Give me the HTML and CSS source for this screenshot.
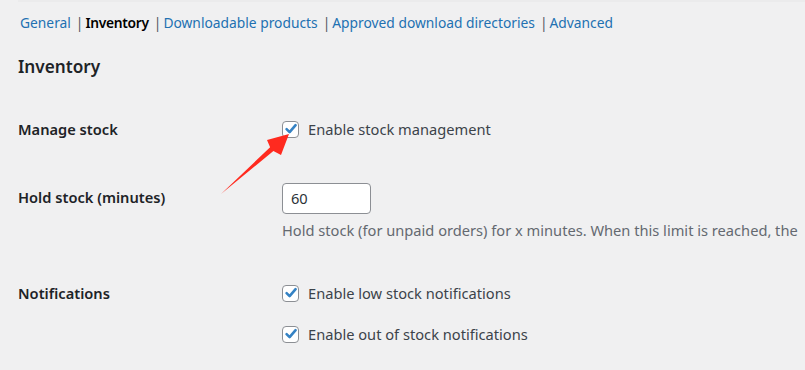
FILE: index.html
```html
<!DOCTYPE html>
<html>
<head>
<meta charset="utf-8">
<link rel="stylesheet" href="styles.css">
</head>
<body>
<div class="page">
  <div class="topband"></div>
  <ul class="subsubsub">
    <li><a href="#">General</a><span class="sep">|</span></li>
    <li><span class="current">Inventory</span><span class="sep">|</span></li>
    <li><a href="#">Downloadable products</a><span class="sep">|</span></li>
    <li><a href="#">Approved download directories</a><span class="sep">|</span></li>
    <li><a href="#">Advanced</a></li>
  </ul>
  <h2 class="title">Inventory</h2>
  <div class="row row-manage">
    <div class="label">Manage stock</div>
    <div class="field">
      <label class="check"><span class="box"><svg viewBox="0 0 16 16" width="16" height="16"><path d="M3.6 8.2 L6.6 11.2 L12.6 4.2" fill="none" stroke="#3582c4" stroke-width="2.6" stroke-linecap="round" stroke-linejoin="round"/></svg></span>Enable stock management</label>
    </div>
  </div>
  <div class="row row-hold">
    <div class="label">Hold stock (minutes)</div>
    <div class="field">
      <div class="input">60</div>
      <p class="desc">Hold stock (for unpaid orders) for x minutes. When this limit is reached, the</p>
    </div>
  </div>
  <div class="row row-notify">
    <div class="label">Notifications</div>
    <div class="field">
      <label class="check"><span class="box"><svg viewBox="0 0 16 16" width="16" height="16"><path d="M3.6 8.2 L6.6 11.2 L12.6 4.2" fill="none" stroke="#3582c4" stroke-width="2.6" stroke-linecap="round" stroke-linejoin="round"/></svg></span>Enable low stock notifications</label>
      <label class="check check-second"><span class="box"><svg viewBox="0 0 16 16" width="16" height="16"><path d="M3.6 8.2 L6.6 11.2 L12.6 4.2" fill="none" stroke="#3582c4" stroke-width="2.6" stroke-linecap="round" stroke-linejoin="round"/></svg></span>Enable out of stock notifications</label>
    </div>
  </div>
  <svg class="arrow" width="805" height="370" viewBox="0 0 805 370">
    <path d="M221 194 L270.1 147.3 L267 140 L289 134 L281 155 L273.4 151.1 Z" fill="#ff2a1f"/>
  </svg>
</div>
</body>
</html>
```
FILE: styles.css
```css
html, body {
  margin: 0;
  padding: 0;
  background: #f0f0f1;
}
body {
  font-family: "Noto Sans", "Open Sans", sans-serif;
  font-size: 14.65px;
  color: #3c434a;
  width: 805px;
  height: 370px;
  overflow: hidden;
}
.page {
  position: relative;
  padding-left: 18px;
}
.topband {
  height: 2px;
  background: #ebebec;
}
.subsubsub {
  list-style: none;
  margin: 0;
  padding: 12px 0 0 2px;
  display: flex;
  height: 18px;
  line-height: 18px;
  font-size: 13.8px;
  color: #50575e;
  white-space: nowrap;
}
.subsubsub a {
  color: #2271b1;
  text-decoration: none;
}
.subsubsub .sep {
  margin: 0 2px 0 5px;
}
.subsubsub .current {
  color: #000;
  font-weight: 600;
  letter-spacing: -0.3px;
}
.title {
  margin: 23px 0 0 0;
  font-size: 17.2px;
  line-height: 24px;
  font-weight: 600;
  color: #1d2327;
}
.row {
  display: grid;
  grid-template-columns: 264px 1fr;
}
.label {
  font-weight: 600;
  color: #1d2327;
  line-height: 20px;
}
.row-manage {
  margin-top: 40px;
}
.check {
  display: flex;
  align-items: center;
  height: 20px;
  line-height: 20px;
  color: #3c434a;
  white-space: nowrap;
}
.box {
  width: 17px;
  height: 17px;
  box-sizing: border-box;
  border: 1px solid #8c8f94;
  border-radius: 4px;
  background: #fff;
  margin-right: 9px;
  display: flex;
  align-items: center;
  justify-content: center;
  overflow: hidden;
}
.box svg {
  flex: none;
}
.row-hold {
  margin-top: 44px;
}
.row-hold .label {
  margin-top: 4px;
}
.input {
  width: 89px;
  height: 31px;
  box-sizing: border-box;
  border: 1px solid #8c8f94;
  border-radius: 4px;
  background: #fff;
  padding-left: 8px;
  line-height: 29px;
  color: #2c3338;
}
.desc {
  margin: 6px 0 0 0;
  line-height: 20px;
  color: #646970;
  white-space: nowrap;
}
.row-notify {
  margin-top: 43px;
}
.check-second {
  margin-top: 21px;
}
.arrow {
  position: absolute;
  left: 0;
  top: 0;
  pointer-events: none;
}
```
